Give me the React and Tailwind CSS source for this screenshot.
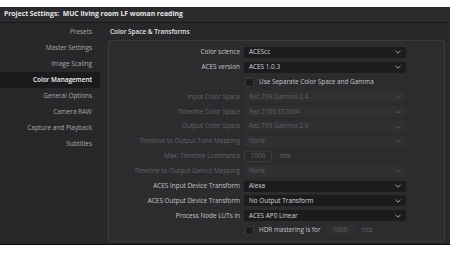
import React from 'react';

const sideItems = [
  'Presets',
  'Master Settings',
  'Image Scaling',
  'Color Management',
  'General Options',
  'Camera RAW',
  'Capture and Playback',
  'Subtitles',
];

const Chevron = ({ dim }) => (
  <svg width="6" height="4" viewBox="0 0 6 4" className="shrink-0">
    <path d="M0.5 0.8 L3 3.2 L5.5 0.8" fill="none" stroke={dim ? '#5a5a5e' : '#a0a0a4'} strokeWidth="1" />
  </svg>
);

const Select = ({ value, dim }) => (
  <div
    className={`flex h-[11px] w-[162px] items-center justify-between rounded-[2px] pl-[5px] pr-[5px] ${
      dim ? 'bg-[#303033] text-[#606064]' : 'bg-[#1c1c1e] text-[#d4d4d6]'
    }`}
  >
    <span>{value}</span>
    <Chevron dim={dim} />
  </div>
);

const Box = () => <div className="h-[9px] w-[9px] rounded-[1px] bg-[#1c1c1e] border border-[#3a3a3d]" />;

const rows = [
  { label: 'Color science', kind: 'select', value: 'ACEScc' },
  { label: 'ACES version', kind: 'select', value: 'ACES 1.0.3' },
  { label: '', kind: 'check', value: 'Use Separate Color Space and Gamma' },
  { label: 'Input Color Space', kind: 'select', value: 'Rec.709 Gamma 2.4', dim: true },
  { label: 'Timeline Color Space', kind: 'select', value: 'Rec.2100 ST2084', dim: true },
  { label: 'Output Color Space', kind: 'select', value: 'Rec.709 Gamma 2.4', dim: true },
  { label: 'Timeline to Output Tone Mapping', kind: 'select', value: 'None', dim: true },
  { label: 'Max. Timeline Luminance', kind: 'nits', value: '1000', dim: true },
  { label: 'Timeline to Output Gamut Mapping', kind: 'select', value: 'None', dim: true },
  { label: 'ACES Input Device Transform', kind: 'select', value: 'Alexa' },
  { label: 'ACES Output Device Transform', kind: 'select', value: 'No Output Transform' },
  { label: 'Process Node LUTs in', kind: 'select', value: 'ACES AP0 Linear' },
  { label: '', kind: 'hdr' },
];

export default function App() {
  return (
    <div
      className="flex h-[253px] w-[450px] flex-col overflow-hidden bg-white text-[6.4px] leading-none"
      style={{ fontFamily: '"Open Sans", sans-serif' }}
    >
      <div className="h-[7px] shrink-0" />
      <div className="flex h-[16px] shrink-0 items-center border-b border-[#1b1b1d] bg-[#2b2b2e] pl-[4px] text-[6.8px] font-bold text-[#e6e6e8]">
        Project Settings:&nbsp; MUC living room LF woman reading
      </div>
      <div className="flex h-[222px] shrink-0 border-b border-[#0c0c0d] bg-[#28282b]">
        <div className="flex w-[100px] shrink-0 flex-col pt-[1px]">
          {sideItems.map((s) => (
            <div
              key={s}
              className={`flex h-[16px] items-center justify-end pr-[8px] ${
                s === 'Color Management' ? 'bg-[#1a1a1c] font-semibold text-[#f2f2f2]' : 'text-[#a9a9ac]'
              }`}
            >
              {s}
            </div>
          ))}
        </div>
        <div className="flex flex-1 flex-col pl-[8px] pr-[5px]">
          <div className="flex h-[17px] items-center pl-[2px] pt-[1px] font-semibold text-[#e2e2e4]">
            Color Space &amp; Transforms
          </div>
          <div className="flex h-[202px] flex-col rounded-[2px] border border-[#3b3b3f] bg-[#2c2c2f] pt-[4px]">
            {rows.map((r, i) => (
              <div key={i} className="flex h-[14.85px] items-center">
                <div
                  className={`w-[131px] shrink-0 text-right ${r.dim ? 'text-[#646468]' : 'text-[#c4c4c7]'}`}
                >
                  {r.label}
                </div>
                <div className="ml-[4px] flex items-center">
                  {r.kind === 'select' && <Select value={r.value} dim={r.dim} />}
                  {r.kind === 'check' && (
                    <div className="flex items-center gap-[5px] pl-[1px] text-[#c4c4c7]">
                      <Box />
                      <span>{r.value}</span>
                    </div>
                  )}
                  {r.kind === 'nits' && (
                    <div className="flex items-center text-[#646468]">
                      <div className="flex h-[11px] w-[28px] items-center justify-center rounded-[2px] border border-[#3a3a3d] bg-[#2a2a2d]">
                        {r.value}
                      </div>
                      <span className="ml-[8px]">nits</span>
                    </div>
                  )}
                  {r.kind === 'hdr' && (
                    <div className="flex items-center pl-[1px]">
                      <Box />
                      <span className="ml-[5px] text-[#c4c4c7]">HDR mastering is for</span>
                      <div className="ml-[5px] flex h-[11px] w-[29px] items-center justify-center rounded-[2px] bg-[#303033] text-[#606064]">
                        1000
                      </div>
                      <span className="ml-[7px] text-[#606064]">nits</span>
                    </div>
                  )}
                </div>
              </div>
            ))}
          </div>
        </div>
      </div>
    </div>
  );
}
